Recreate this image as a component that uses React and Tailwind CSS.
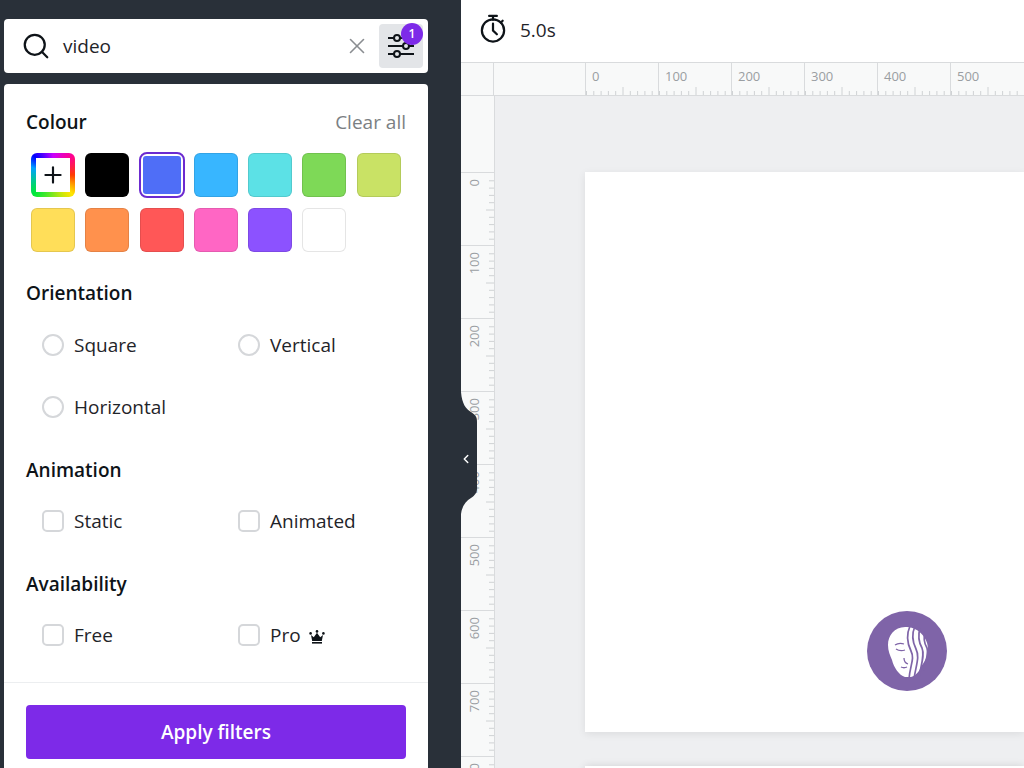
import { ChevronLeft, Search, X, Plus } from 'lucide-react';

const swatches = [
  'bg-black',
  'selected',
  'bg-[#38b6ff]',
  'bg-[#5ce1e6]',
  'bg-[#7ed957]',
  'bg-[#c9e265]',
  'bg-[#ffde59]',
  'bg-[#ff914d]',
  'bg-[#ff5757]',
  'bg-[#ff66c4]',
  'bg-[#8c52ff]',
  'bg-white',
];

const marks = [0, 100, 200, 300, 400, 500, 600, 700, 800];

function FilterHeading({ children, className }) {
  return <h3 className={`text-[19px] leading-6 font-semibold text-[#0e1318] ${className}`}>{children}</h3>;
}

function Option({ label, round, children }) {
  return (
    <label className="flex items-center h-[24px]">
      <span className={`w-[22px] h-[22px] border-2 border-[#d5d7da] bg-white shrink-0 ${round ? 'rounded-full' : 'rounded-[5px]'}`} />
      <span className="ml-[10px] text-[19px] leading-6 text-[#1f2429]">{label}</span>
      {children}
    </label>
  );
}

function SlidersIcon() {
  return (
    <svg width="28" height="28" viewBox="0 0 28 28" fill="none" stroke="#0e1318" strokeWidth="2">
      <path d="M1 6h6M13 6h14M1 14h15M22 14h5M1 22h6M13 22h14" />
      <circle cx="10" cy="6" r="3" />
      <circle cx="19" cy="14" r="3" />
      <circle cx="10" cy="22" r="3" />
    </svg>
  );
}

function StopwatchIcon() {
  return (
    <svg width="28" height="29" viewBox="0 0 28 30" fill="none" stroke="#0e1318" strokeWidth="2.3" strokeLinecap="round">
      <path d="M10 2h8M14 2v4" />
      <circle cx="14" cy="17" r="11.5" />
      <path d="M14 10v7l4 4M24 7l-2 2" />
    </svg>
  );
}

function CrownIcon() {
  return (
    <svg className="ml-[8px] mt-[4px]" width="16" height="14" viewBox="0 0 16 14" fill="#0e1318">
      <circle cx="1.6" cy="3.4" r="1.3" />
      <circle cx="8" cy="1.4" r="1.3" />
      <circle cx="14.4" cy="3.4" r="1.3" />
      <path d="M2 5l2.8 2.2L8 2.8l3.2 4.4L14 5l-1.2 6H3.2z" />
      <rect x="3" y="12" width="10" height="1.6" />
    </svg>
  );
}

function HorizontalTicks() {
  return (
    <svg className="absolute left-0 bottom-0" width="73" height="9" stroke="#cfd2d4">
      {Array.from({ length: 10 }, (_, i) => {
        const x = i * 7.3 + 0.5;
        return <line key={i} x1={x} x2={x} y1={i === 5 ? 1 : 5} y2="9" />;
      })}
    </svg>
  );
}

function VerticalTicks() {
  return (
    <svg className="absolute right-0 top-0" width="9" height="73" stroke="#cfd2d4">
      {Array.from({ length: 9 }, (_, i) => {
        const y = (i + 1) * 7.3 + 0.5;
        return <line key={i} x1={i === 4 ? 1 : 4} x2="9" y1={y} y2={y} />;
      })}
    </svg>
  );
}

function FaceLogo() {
  return (
    <svg width="80" height="80" viewBox="0 0 80 80">
      <circle cx="40" cy="40" r="40" fill="#7f64a8" />
      <path
        fill="#fff"
        d="M40 16C28 15 21 24 21 34c0 6 2 10 4 15 2 8 7 15 13 17h6c6-2 8-6 10-10 3-5 7-10 7-18 0-10-8-21-21-22z"
      />
      <g fill="none" stroke="#7f64a8">
        <path strokeWidth="1.3" d="M29 38c3 2 6 2 9 1M28 34c3-2 6-2 9-1M37 47c0 3 1 5 4 6M34 56c2 1 4 1 6 0" />
        <g strokeWidth="1.7">
          <path d="M43 15C39 24 40 32 44 40 48 48 43 54 42 68" />
          <path d="M48 15C45 22 45 30 49 38 53 46 49 54 47 68" />
          <path d="M53 17C51 24 51 30 55 37 58 44 54 54 52 66" />
          <path d="M58 21C56 28 57 32 60 37 62 44 58 50 57 60" />
        </g>
      </g>
    </svg>
  );
}

export default function App() {
  return (
    <div className="relative flex w-[1024px] h-[768px] overflow-hidden font-['Open_Sans','Noto_Sans',sans-serif]">
      {/* Side panel */}
      <div className="w-[461px] shrink-0 bg-[#293039] pt-[19px] pl-[4px] pr-[33px]">
        <div className="h-[54px] bg-white rounded-[4px] flex items-center pl-[17px] pr-[5px]">
          <Search size={30} strokeWidth={1.8} className="text-[#0e1318]" />
          <span className="ml-[12px] text-[19px] text-[#1f2429]">video</span>
          <X size={26} strokeWidth={1.5} className="ml-auto text-[#8a8d91]" />
          <button className="relative ml-[9px] w-[44px] h-[44px] rounded-[4px] bg-[#e3e5e8] flex items-center justify-center">
            <SlidersIcon />
            <span className="absolute -top-[1px] right-0 w-[22px] h-[22px] rounded-full bg-[#7d2ae8] text-white text-[12px] font-semibold flex items-center justify-center">
              1
            </span>
          </button>
        </div>

        <div className="mt-[11px] h-[720px] bg-white rounded-t-[4px]">
          <div className="px-[22px] pt-[26px]">
            <div className="flex items-center justify-between">
              <FilterHeading>Colour</FilterHeading>
              <span className="text-[19px] leading-6 text-[#7b7f83]">Clear all</span>
            </div>

            <div className="mt-[19px] ml-[5px] grid grid-cols-[repeat(7,44px)] gap-x-[10.3px] gap-y-[11px]">
              <div className="w-[44px] h-[44px] rounded-[6px] p-[5px] bg-[conic-gradient(#c800ff,#ff0090_45deg,#ff3c00_90deg,#ffe600_135deg,#00e83a_225deg,#00a0ff_290deg,#0000ff_315deg,#c800ff)]">
                <div className="w-full h-full bg-white flex items-center justify-center">
                  <Plus size={26} strokeWidth={2} className="text-[#0e1318]" />
                </div>
              </div>
              {swatches.map((c) =>
                c === 'selected' ? (
                  <div key={c} className="w-[46px] h-[46px] -m-px rounded-[8px] border-2 border-[#6c2bd0] bg-white p-[2px]">
                    <div className="w-full h-full rounded-[3px] bg-[#4f6ef7]" />
                  </div>
                ) : (
                  <div key={c} className={`w-[44px] h-[44px] rounded-[6px] border border-black/10 ${c}`} />
                ),
              )}
            </div>

            <FilterHeading className="mt-[29px]">Orientation</FilterHeading>
            <div className="mt-[28px] ml-[16px] grid grid-cols-[196px_1fr] gap-y-[38px]">
              <Option round label="Square" />
              <Option round label="Vertical" />
              <Option round label="Horizontal" />
            </div>

            <FilterHeading className="mt-[39px]">Animation</FilterHeading>
            <div className="mt-[27px] ml-[16px] grid grid-cols-[196px_1fr]">
              <Option label="Static" />
              <Option label="Animated" />
            </div>

            <FilterHeading className="mt-[39px]">Availability</FilterHeading>
            <div className="mt-[27px] ml-[16px] grid grid-cols-[196px_1fr]">
              <Option label="Free" />
              <Option label="Pro">
                <CrownIcon />
              </Option>
            </div>
          </div>

          <div className="mt-[35px] border-t border-[#eceef0] px-[22px] pt-[22px]">
            <button className="w-full h-[54px] rounded-[4px] bg-[#7d2ae8] text-white text-[19px] font-semibold">
              Apply filters
            </button>
          </div>
        </div>
      </div>

      {/* Editor */}
      <div className="flex-1 flex flex-col min-w-0">
        <div className="h-[62px] shrink-0 bg-white flex items-center pl-[18px] gap-[13px]">
          <span className="-mt-[5px]">
            <StopwatchIcon />
          </span>
          <span className="-mt-[1px] text-[19px] font-medium text-[#1f2429]">5.0s</span>
        </div>

        <div className="h-[34px] shrink-0 flex bg-[#f8f9f9] border-y border-[#d9dbdd]">
          <div className="w-[33px] shrink-0 border-r border-[#d9dbdd]" />
          <div className="w-[91px] shrink-0" />
          {marks.slice(0, 6).map((m) => (
            <div key={m} className="relative w-[73px] shrink-0 border-l border-[#d9dbdd] pl-[6px] text-[13px] leading-[27px] text-[#9a9ea2]">
              {m}
              <HorizontalTicks />
            </div>
          ))}
        </div>

        <div className="flex-1 flex min-h-0">
          <div className="w-[34px] shrink-0 bg-[#f8f9f9] border-r border-[#d9dbdd] pt-[76px] overflow-hidden">
            {marks.map((m) => (
              <div key={m} className="relative h-[73px] border-t border-[#d9dbdd] pt-[6px] pl-[6px]">
                <span className="block [writing-mode:vertical-rl] rotate-180 text-[13px] leading-[15px] text-[#9a9ea2]">{m}</span>
                <VerticalTicks />
              </div>
            ))}
          </div>

          <div className="flex-1 bg-[#eeeff1] pl-[90px] pt-[76px] overflow-hidden">
            <div className="relative h-[560px] bg-white shadow-[0_2px_8px_rgba(0,0,0,0.08)]">
              <div className="absolute left-[282px] top-[439px]">
                <FaceLogo />
              </div>
            </div>
            <div className="mt-[34px] h-[60px] bg-white shadow-[0_0_8px_rgba(0,0,0,0.12)]" />
          </div>
        </div>
      </div>

      {/* Collapse handle */}
      <div className="absolute left-[461px] top-[392px] w-[16px] h-[122px] flex items-center">
        <svg className="absolute inset-0" width="16" height="122" viewBox="0 0 16 122" fill="#293039">
          <path d="M0 0C1 12 5 17 10 20c4 3 6 4 6 10v66c0 5-2 7-6 10-5 3-9 8-10 16z" />
        </svg>
        <ChevronLeft size={14} strokeWidth={2.5} className="relative ml-[-2px] mt-[12px] text-white" />
      </div>
    </div>
  );
}
